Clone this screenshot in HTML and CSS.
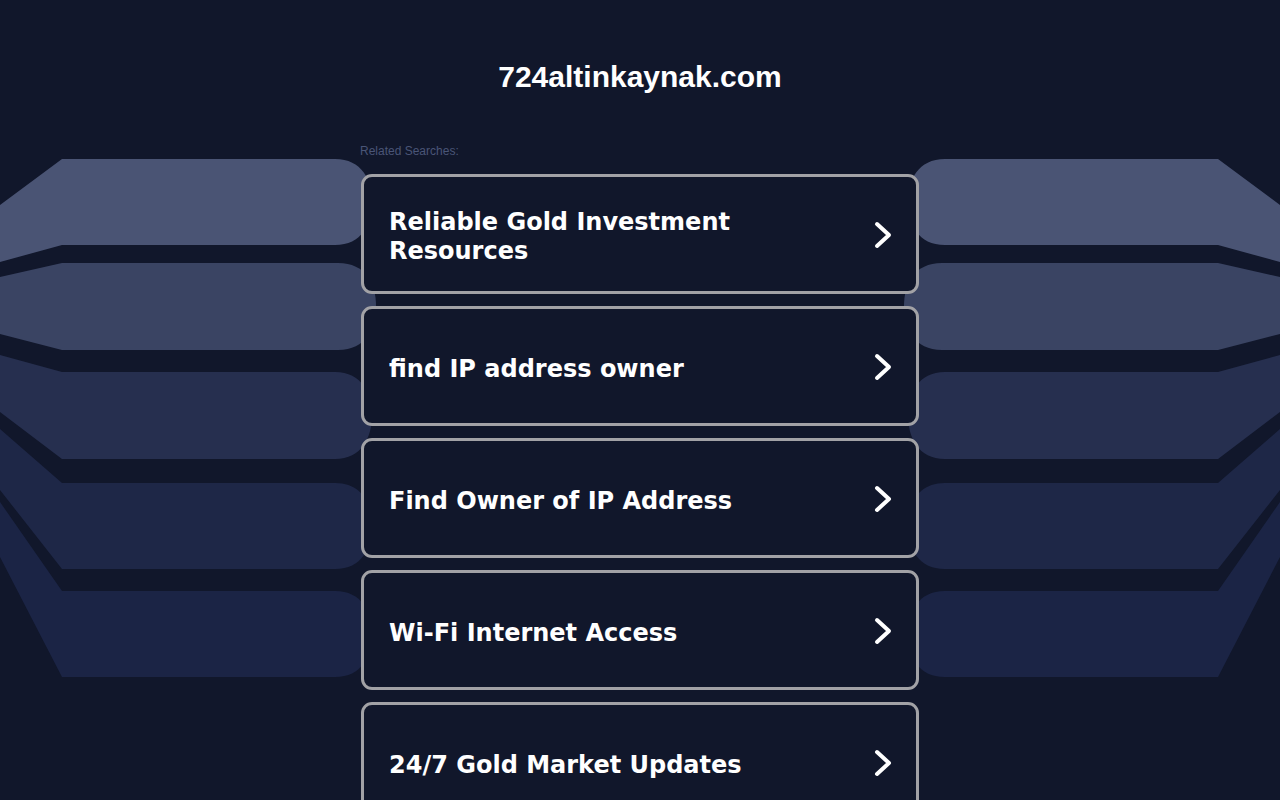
FILE: index.html
```html
<!DOCTYPE html>
<html lang="en">
<head>
<meta charset="utf-8">
<title>724altinkaynak.com</title>
<link rel="stylesheet" href="styles.css">
</head>
<body>
<svg class="backdrop" viewBox="0 0 1280 800" preserveAspectRatio="none" aria-hidden="true">
  <g class="left">
    <path class="b1" d="M0,205 L62,159 H335 C362,159 372,180 372,202 C372,224 362,245 335,245 H62 L0,262 Z"/>
    <path class="b2" d="M0,277 L62,263 H338 C366,263 376,284 376,306 C376,328 366,350 338,350 H62 L0,334 Z"/>
    <path class="b3" d="M0,355 L62,372 H335 C362,372 372,394 372,415 C372,437 362,459 335,459 H62 L0,412 Z"/>
    <path class="b4" d="M0,429 L62,483 H335 C362,483 372,504 372,526 C372,548 362,569 335,569 H62 L0,490 Z"/>
    <path class="b5" d="M0,502 L62,591 H335 C362,591 372,612 372,634 C372,656 362,677 335,677 H62 L0,557 Z"/>
  </g>
  <g class="right" transform="translate(1280,0) scale(-1,1)">
    <path class="b1" d="M0,205 L62,159 H335 C362,159 372,180 372,202 C372,224 362,245 335,245 H62 L0,262 Z"/>
    <path class="b2" d="M0,277 L62,263 H338 C366,263 376,284 376,306 C376,328 366,350 338,350 H62 L0,334 Z"/>
    <path class="b3" d="M0,355 L62,372 H335 C362,372 372,394 372,415 C372,437 362,459 335,459 H62 L0,412 Z"/>
    <path class="b4" d="M0,429 L62,483 H335 C362,483 372,504 372,526 C372,548 362,569 335,569 H62 L0,490 Z"/>
    <path class="b5" d="M0,502 L62,591 H335 C362,591 372,612 372,634 C372,656 362,677 335,677 H62 L0,557 Z"/>
  </g>
</svg>
<main class="page">
  <h1 class="domain">724altinkaynak.com</h1>
  <section class="related">
    <p class="related-label">Related Searches:</p>
    <ul class="links">
      <li><a class="link-card" href="#"><span class="link-text">Reliable Gold Investment Resources</span><svg class="chev" viewBox="0 0 18 28"><polyline points="3,3 15,14 3,25"/></svg></a></li>
      <li><a class="link-card" href="#"><span class="link-text">find IP address owner</span><svg class="chev" viewBox="0 0 18 28"><polyline points="3,3 15,14 3,25"/></svg></a></li>
      <li><a class="link-card" href="#"><span class="link-text">Find Owner of IP Address</span><svg class="chev" viewBox="0 0 18 28"><polyline points="3,3 15,14 3,25"/></svg></a></li>
      <li><a class="link-card" href="#"><span class="link-text">Wi-Fi Internet Access</span><svg class="chev" viewBox="0 0 18 28"><polyline points="3,3 15,14 3,25"/></svg></a></li>
      <li><a class="link-card" href="#"><span class="link-text">24/7 Gold Market Updates</span><svg class="chev" viewBox="0 0 18 28"><polyline points="3,3 15,14 3,25"/></svg></a></li>
    </ul>
  </section>
</main>
</body>
</html>
```

FILE: styles.css
```css
html, body {
  margin: 0;
  padding: 0;
}

body {
  background: #11172b;
  font-family: "Liberation Sans", Arial, sans-serif;
  color: #ffffff;
  min-height: 800px;
  overflow: hidden;
}

.backdrop {
  position: absolute;
  left: 0;
  top: 0;
  width: 1280px;
  height: 800px;
  z-index: 0;
}

.b1 { fill: #4a5474; }
.b2 { fill: #3a4463; }
.b3 { fill: #262f4f; }
.b4 { fill: #1e2747; }
.b5 { fill: #1b2445; }

.page {
  position: relative;
  z-index: 1;
  width: 558px;
  margin: 0 auto;
}

.domain {
  margin: 0;
  padding-top: 60px;
  font-size: 30px;
  line-height: 34px;
  font-weight: bold;
  text-align: center;
  color: #ffffff;
}

.related {
  margin-top: 50px;
}

.related-label {
  margin: 0 0 16px -1px;
  font-size: 12px;
  line-height: 14px;
  color: #4a5577;
}

.links {
  list-style: none;
  margin: 0;
  padding: 0;
  display: flex;
  flex-direction: column;
  gap: 12px;
}

.link-card {
  box-sizing: border-box;
  height: 120px;
  display: flex;
  align-items: center;
  justify-content: space-between;
  padding: 0 24px 0 25px;
  border: 3px solid #a2a2a6;
  border-radius: 11px;
  background: #11172b;
  text-decoration: none;
  color: #ffffff;
}

.link-text {
  font-family: "DejaVu Sans", Verdana, sans-serif;
  font-weight: bold;
  font-size: 24px;
  line-height: 29px;
  padding-top: 6px;
  max-width: 440px;
}

.chev {
  width: 18px;
  height: 28px;
  flex: none;
  margin-top: 2px;
}

.chev polyline {
  fill: none;
  stroke: #ffffff;
  stroke-width: 4;
  stroke-linecap: round;
  stroke-linejoin: round;
}
```
